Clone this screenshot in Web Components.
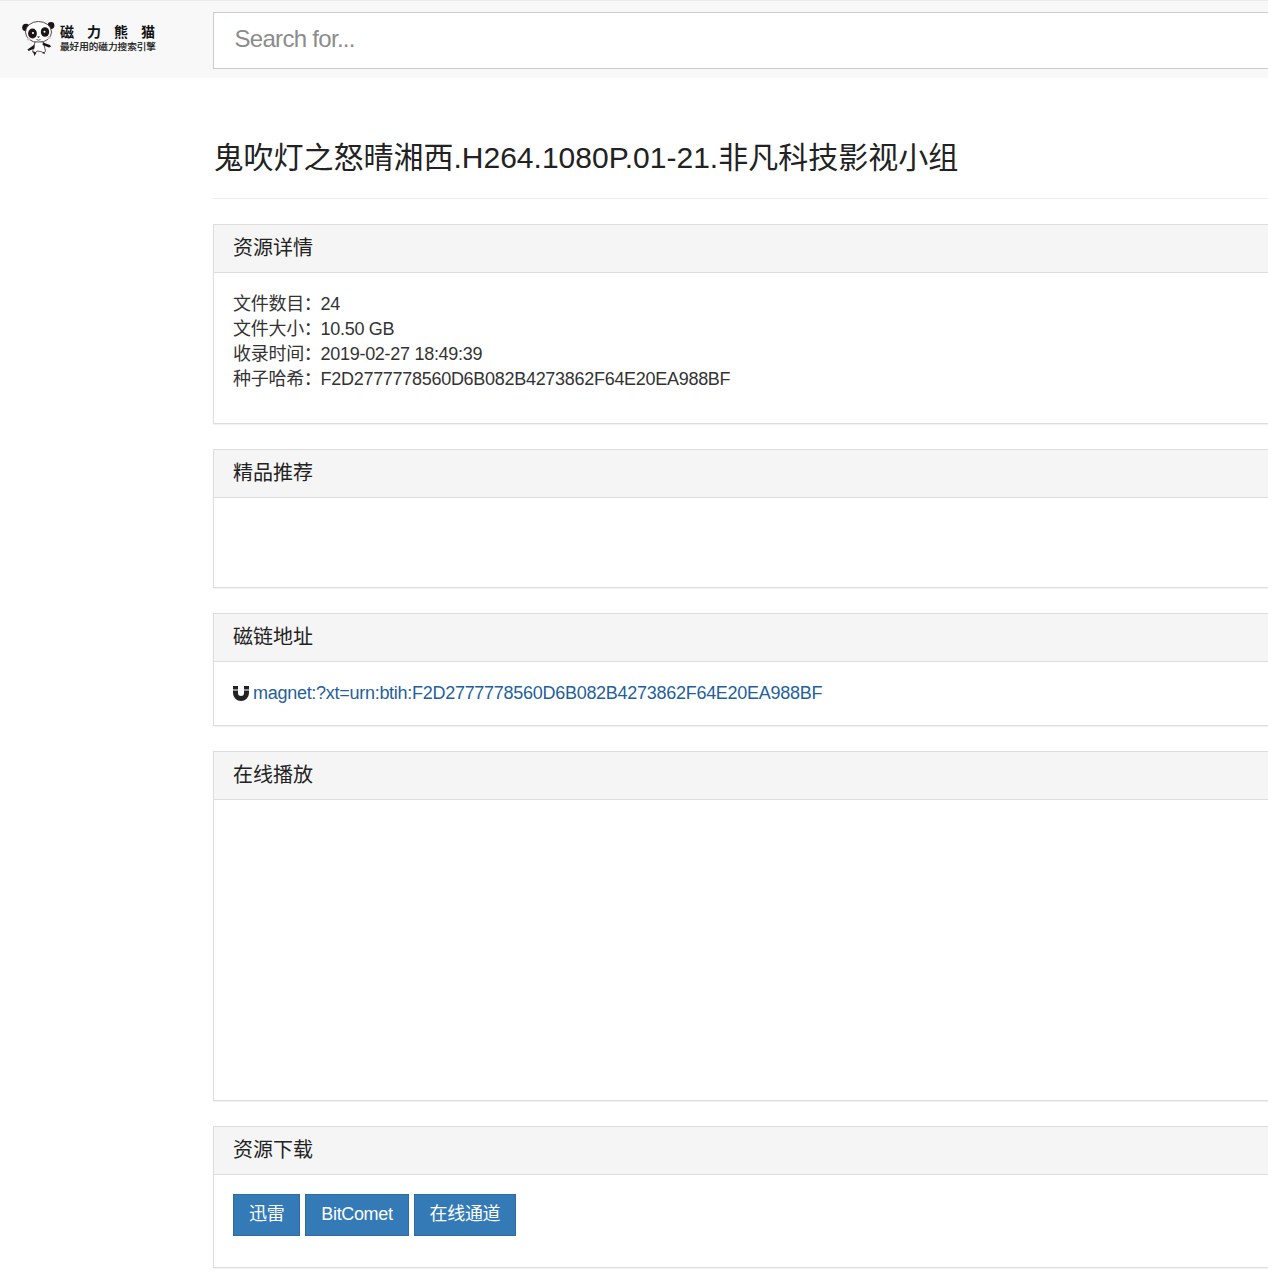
<!DOCTYPE html>
<html lang="zh">
<head>
<meta charset="utf-8">
<title>磁力熊猫</title>
<style>
html, body { margin: 0; padding: 0; background: #fff; overflow: hidden; }
body { font-family: "Liberation Sans", "Noto Sans CJK SC", sans-serif; font-size: 18px; color: #333; }
</style>
</head>
<body>
<site-nav></site-nav>
<page-main>
  <page-title>鬼吹灯之怒晴湘西.H264.1080P.01-21.非凡科技影视小组</page-title>
  <info-panel heading="资源详情" body-height="150">
    <stat-row label="文件数目&#xFF1A;" value="24"></stat-row>
    <stat-row label="文件大小&#xFF1A;" value="10.50 GB"></stat-row>
    <stat-row label="收录时间&#xFF1A;" value="2019-02-27 18:49:39"></stat-row>
    <stat-row label="种子哈希&#xFF1A;" value="F2D2777778560D6B082B4273862F64E20EA988BF"></stat-row>
  </info-panel>
  <info-panel heading="精品推荐" body-height="89"></info-panel>
  <info-panel heading="磁链地址" body-height="63">
    <magnet-link href="#">magnet:?xt=urn:btih:F2D2777778560D6B082B4273862F64E20EA988BF</magnet-link>
  </info-panel>
  <info-panel heading="在线播放" body-height="300"></info-panel>
  <info-panel heading="资源下载" body-height="92">
    <dl-button>迅雷</dl-button>
    <dl-button>BitComet</dl-button>
    <dl-button>在线通道</dl-button>
  </info-panel>
</page-main>

<script>
const navTemplate = document.createElement("template");
navTemplate.innerHTML = `
<style>
:host { display: flex; height: 78px; background: #f8f8f8; box-sizing: border-box; border-top: 1px solid #ececec; width: 1500px; }
.brand { width: 213px; flex: none; display: flex; align-items: flex-start; padding: 20px 0 0 22px; box-sizing: border-box; gap: 4px; color: #111; }
.brand svg { flex: none; }
.words { display: flex; flex-direction: column; font-family: "Noto Sans CJK SC", sans-serif; line-height: 1; padding-top: 3px; }
.name { font-size: 14px; font-weight: 700; display: flex; justify-content: space-between; width: 95px; height: 14px; margin-bottom: 4px; }
.slogan { font-size: 9.6px; font-weight: 400; -webkit-text-stroke: .2px #111; white-space: nowrap; }
input { flex: none; width: 1200px; height: 57px; margin-top: 11px; box-sizing: border-box; border: 1px solid #ccc; background: #fff; padding: 0 20px 4px 20.5px; font: 24px "Liberation Sans", sans-serif; letter-spacing: -.7px; color: #555; outline: 0; border-radius: 0; }
input::placeholder { color: #8c8c8c; opacity: 1; }
</style>
<div class="brand">
  <svg width="34" height="36" viewBox="0 0 34 36">
    <circle cx="4" cy="6.500" r="3.800" fill="#1c1418"/>
    <circle cx="29" cy="4.500" r="3.400" fill="#1c1418"/>
    <ellipse cx="16.500" cy="11" rx="13" ry="10.500" fill="#fff" stroke="#221a1e" stroke-width=".8"/>
    <ellipse cx="10.500" cy="12.500" rx="4.400" ry="5" fill="#1c1418"/>
    <ellipse cx="23" cy="11" rx="4.200" ry="4.800" fill="#1c1418"/>
    <circle cx="11" cy="12" r="1.100" fill="#fff"/>
    <circle cx="22.500" cy="10.800" r="1" fill="#fff"/>
    <circle cx="6.500" cy="18" r="1.600" fill="#eeb9c6"/>
    <circle cx="27" cy="16.500" r="1.600" fill="#eeb9c6"/>
    <path d="M15 15.500h3l-1.500 1.500z" fill="#1c1418"/>
    <path d="M14.500 18.500q2 1.400 4 0" fill="none" stroke="#1c1418" stroke-width=".7"/>
    <path d="M13 21l-1.500 6 -1 4 3 .5 1.500-1.500 4 .5 3 1.500 1.500-2-1-4-1-5z" fill="#fff" stroke="#221a1e" stroke-width=".7"/>
    <path d="M12.500 23.500l-2 1.500-5 3.500 1 1.500 6-2.500z" fill="#1c1418"/>
    <path d="M21 21.500l7 2.500 1 1.800-2 .7-6.500-2.500z" fill="#1c1418"/>
    <path d="M11 30.500l1.500 4.500 2-3.500z M22 31l1 2-3-1z" fill="#1c1418"/>
  </svg>
  <div class="words">
    <div class="name"><span>磁</span><span>力</span><span>熊</span><span>猫</span></div>
    <div class="slogan">最好用的磁力搜索引擎</div>
  </div>
</div>
<input type="text" placeholder="Search for...">
`;
class SiteNav extends HTMLElement {
    connectedCallback() {
        const root = this.attachShadow({ mode: "open" });
        root.appendChild(navTemplate.content.cloneNode(true));
    }
}
customElements.define("site-nav", SiteNav);

class PageMain extends HTMLElement {
    connectedCallback() {
        this.attachShadow({ mode: "open" }).innerHTML = `
<style>
:host { display: block; width: 1300px; padding: 0 0 0 213px; }
</style>
<slot></slot>`;
    }
}
customElements.define("page-main", PageMain);

class PageTitle extends HTMLElement {
    connectedCallback() {
        this.attachShadow({ mode: "open" }).innerHTML = `
<style>
:host { display: block; height: 121px; box-sizing: border-box; padding: 58px 0 0 .5px; margin-bottom: 25px; border-bottom: 1px solid #eee; }
h1 { margin: 0; font-size: 30px; font-weight: 400; line-height: 44px; color: #222; white-space: nowrap; }
</style>
<h1><slot></slot></h1>`;
    }
}
customElements.define("page-title", PageTitle);

const panelTemplate = document.createElement("template");
panelTemplate.innerHTML = `
<style>
:host { display: block; box-sizing: border-box; border: 1px solid #ddd; border-right: 0; margin-bottom: 25px; background: #fff; box-shadow: 0 1px 1px rgba(0,0,0,.05); }
.head { height: 48px; box-sizing: border-box; border-bottom: 1px solid #ddd; background: #f5f5f5; padding: 0 19px; font-size: 20px; line-height: 46px; color: #222; }
.body { box-sizing: border-box; padding: 18px 19px 0; }
</style>
<div class="head"></div>
<div class="body"><slot></slot></div>
`;
class InfoPanel extends HTMLElement {
    connectedCallback() {
        const shadowRoot = this.attachShadow({ mode: "open" });
        shadowRoot.appendChild(panelTemplate.content.cloneNode(true));
        shadowRoot.querySelector(".head").textContent = this.getAttribute("heading");
        shadowRoot.querySelector(".body").style.height = this.getAttribute("body-height") + "px";
    }
}
customElements.define("info-panel", InfoPanel);

class StatRow extends HTMLElement {
    connectedCallback() {
        this.attachShadow({ mode: "open" }).innerHTML = `
<style>
:host { display: block; font-size: 18px; line-height: 25px; color: #333; white-space: nowrap; letter-spacing: -.29px; }
:host(:first-child) { margin-top: 1px; }
span { margin-right: -1px; }
</style>
<span>${this.getAttribute("label")}</span>${this.getAttribute("value")}`;
    }
}
customElements.define("stat-row", StatRow);

class MagnetLink extends HTMLElement {
    connectedCallback() {
        this.attachShadow({ mode: "open" }).innerHTML = `
<style>
:host { display: flex; align-items: center; gap: 4px; font-size: 18px; line-height: 25px; padding-top: 1px; white-space: nowrap; letter-spacing: -.28px; }
a { color: #1f5f9e; text-decoration: none; }
svg { flex: none; position: relative; top: -1px; }
</style>
<svg width="16" height="16" viewBox="0 0 16 16"><path d="M0 1h5v7a3 3 0 0 0 6 0V1h5v7a8 8 0 0 1-16 0z" fill="#222"/><path d="M0 5h5M11 5h5" stroke="#fff" stroke-width="1"/></svg>
<a href="${this.getAttribute("href")}"><slot></slot></a>`;
    }
}
customElements.define("magnet-link", MagnetLink);

class DlButton extends HTMLElement {
    connectedCallback() {
        this.attachShadow({ mode: "open" }).innerHTML = `
<style>
:host { display: inline-block; height: 42px; box-sizing: border-box; padding: 0 15px; margin: 1px 0 0; background: #337ab7; border: 1px solid #2e6da4; color: #fff; font-size: 18px; line-height: 38px; vertical-align: top; letter-spacing: -.35px; }
</style>
<slot></slot>`;
    }
}
customElements.define("dl-button", DlButton);
</script>
</body>
</html>
